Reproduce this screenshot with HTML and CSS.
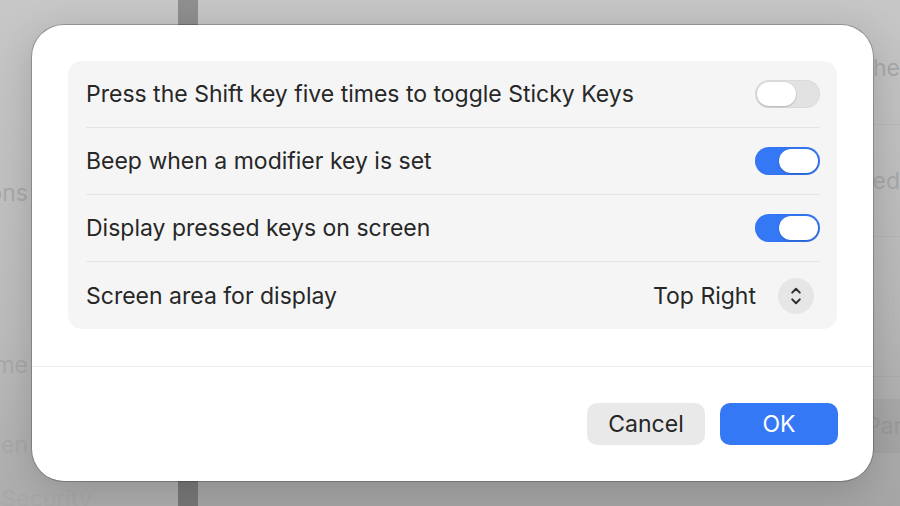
FILE: index.html
```html
<!DOCTYPE html>
<html lang="en">
<head>
<meta charset="utf-8">
<title>Sticky Keys Options</title>
<link rel="stylesheet" href="styles.css">
</head>
<body>
<div class="screen">
  <div class="backdrop">
    <aside class="sidebar">
      <div class="side-item si-1"><span>Notifications</span></div>
      <div class="side-item si-2"><span>Screen Time</span></div>
      <div class="side-item si-3"><span>Lock Screen</span></div>
      <div class="side-item si-4"><span>Privacy &amp; Security</span></div>
    </aside>
    <div class="divider"></div>
    <main class="content">
      <div class="c-row c-row-1"><span class="c-text">Use the</span></div>
      <div class="c-row c-row-2"><span class="c-text">Pressed</span></div>
      <div class="c-row c-row-3"></div>
      <div class="c-row c-row-btn"><span class="c-btn">Panel</span></div>
    </main>
  </div>

  <div class="dialog">
    <div class="group">
      <div class="row">
        <span class="label">Press the Shift key five times to toggle Sticky Keys</span>
        <div class="toggle"><div class="knob"></div></div>
      </div>
      <div class="sep"></div>
      <div class="row">
        <span class="label">Beep when a modifier key is set</span>
        <div class="toggle on"><div class="knob"></div></div>
      </div>
      <div class="sep"></div>
      <div class="row">
        <span class="label">Display pressed keys on screen</span>
        <div class="toggle on"><div class="knob"></div></div>
      </div>
      <div class="sep"></div>
      <div class="row row-last">
        <span class="label">Screen area for display</span>
        <div class="popup">
          <span class="popup-value">Top Right</span>
          <span class="stepper">
            <svg width="14" height="22" viewBox="0 0 14 22" aria-hidden="true">
              <path d="M3.2 7.6 L7 3.8 L10.8 7.6" fill="none" stroke="#2e2e2e" stroke-width="2" stroke-linecap="round" stroke-linejoin="round"/>
              <path d="M3.2 14.4 L7 18.2 L10.8 14.4" fill="none" stroke="#2e2e2e" stroke-width="2" stroke-linecap="round" stroke-linejoin="round"/>
            </svg>
          </span>
        </div>
      </div>
    </div>
    <div class="footer">
      <button class="btn btn-cancel">Cancel</button>
      <button class="btn btn-ok">OK</button>
    </div>
  </div>
</div>
</body>
</html>
```

FILE: styles.css
```css
* { box-sizing: border-box; }

html, body {
  margin: 0;
  padding: 0;
}

body {
  width: 900px;
  height: 506px;
  overflow: hidden;
  font-family: Inter, "Noto Sans", "Liberation Sans", sans-serif;
  background: #bdbdbd;
}

.screen {
  position: relative;
  width: 900px;
  height: 506px;
  overflow: hidden;
}

/* ---------- dimmed settings window behind ---------- */
.backdrop {
  display: flex;
  width: 100%;
  height: 100%;
}

.sidebar {
  width: 178px;
  flex: none;
  display: flex;
  flex-direction: column;
  background: linear-gradient(180deg, #c7c7c7 0%, #bcbcbc 65%, #adadad 100%);
  color: #a9a9a9;
  font-size: 23px;
  overflow: hidden;
}

.side-item {
  width: 28px;
  height: 40px;
  flex: none;
  display: flex;
  align-items: center;
  justify-content: flex-end;
  white-space: nowrap;
}

.si-1 { margin-top: 173px; }
.si-2 { margin-top: 132px; }
.si-3 { margin-top: 40px; }
.si-4 { margin-top: 14px; width: 92px; }

.divider {
  width: 20px;
  flex: none;
  background: linear-gradient(180deg, #8f8f8f 0%, #858585 60%, #777777 100%);
}

.content {
  flex: 1;
  min-width: 0;
  display: flex;
  flex-direction: column;
  background: linear-gradient(180deg, #c6c6c6 0%, #b9b9b9 60%, #a6a6a6 100%);
  padding-top: 12px;
  overflow: hidden;
}

.c-row {
  flex: none;
  display: flex;
  align-items: center;
  justify-content: flex-end;
  border-bottom: 1px solid rgba(0,0,0,0.035);
  color: #a8a8a8;
  font-size: 23px;
  white-space: nowrap;
}

.c-row-1 { height: 113px; }
.c-row-2 { height: 112px; }
.c-row-3 { height: 140px; }

.c-row-btn {
  height: 54px;
  margin-top: 22px;
  border-bottom: none;
  justify-content: flex-start;
  padding-left: 668px;
  background: rgba(0,0,0,0.04);
}

.c-btn {
  color: #9b9b9b;
  font-size: 23px;
}

/* ---------- dialog ---------- */
.dialog {
  position: absolute;
  left: 32px;
  top: 25px;
  width: 841px;
  height: 456px;
  background: #ffffff;
  border-radius: 32px;
  box-shadow: 0 0 0 1px rgba(0,0,0,0.22), 0 10px 40px rgba(0,0,0,0.18);
  display: flex;
  flex-direction: column;
  color: #272727;
}

.group {
  margin: 36px 36px 0 36px;
  background: #f5f5f5;
  border-radius: 14px;
  padding: 0 17px 0 18px;
}

.row {
  height: 66px;
  display: flex;
  align-items: center;
  justify-content: space-between;
}

.row-last { height: 67px; }

.label {
  font-size: 23px;
}

.sep {
  height: 1px;
  background: #e4e4e4;
}

.toggle {
  width: 65px;
  height: 28px;
  border-radius: 14px;
  background: #e2e2e2;
  box-shadow: inset 0 0 0 1px rgba(0,0,0,0.03);
  padding: 2px;
  display: flex;
  justify-content: flex-start;
}

.toggle.on {
  background: #3478f6;
  justify-content: flex-end;
}

.knob {
  width: 39px;
  height: 24px;
  border-radius: 12px;
  background: #ffffff;
  box-shadow: 0 1px 2px rgba(0,0,0,0.18), 0 0 0 0.5px rgba(0,0,0,0.06);
}

.popup {
  display: flex;
  align-items: center;
  gap: 22px;
  margin-right: 6px;
}

.popup-value {
  font-size: 23px;
}

.stepper {
  width: 36px;
  height: 36px;
  border-radius: 50%;
  background: #e6e6e6;
  display: flex;
  align-items: center;
  justify-content: center;
}

.footer {
  margin-top: 37px;
  border-top: 1px solid #eeeeee;
  flex: 1;
  display: flex;
  justify-content: flex-end;
  align-items: flex-start;
  gap: 15px;
  padding: 36px 35px 0 0;
}

.btn {
  width: 118px;
  height: 42px;
  border: none;
  border-radius: 10px;
  font-family: Inter, "Noto Sans", "Liberation Sans", sans-serif;
  font-size: 23px;
  display: flex;
  align-items: center;
  justify-content: center;
  padding: 0;
}

.btn-cancel {
  background: #e9e9e9;
  color: #262626;
}

.btn-ok {
  background: #3478f6;
  color: #ffffff;
}
```
